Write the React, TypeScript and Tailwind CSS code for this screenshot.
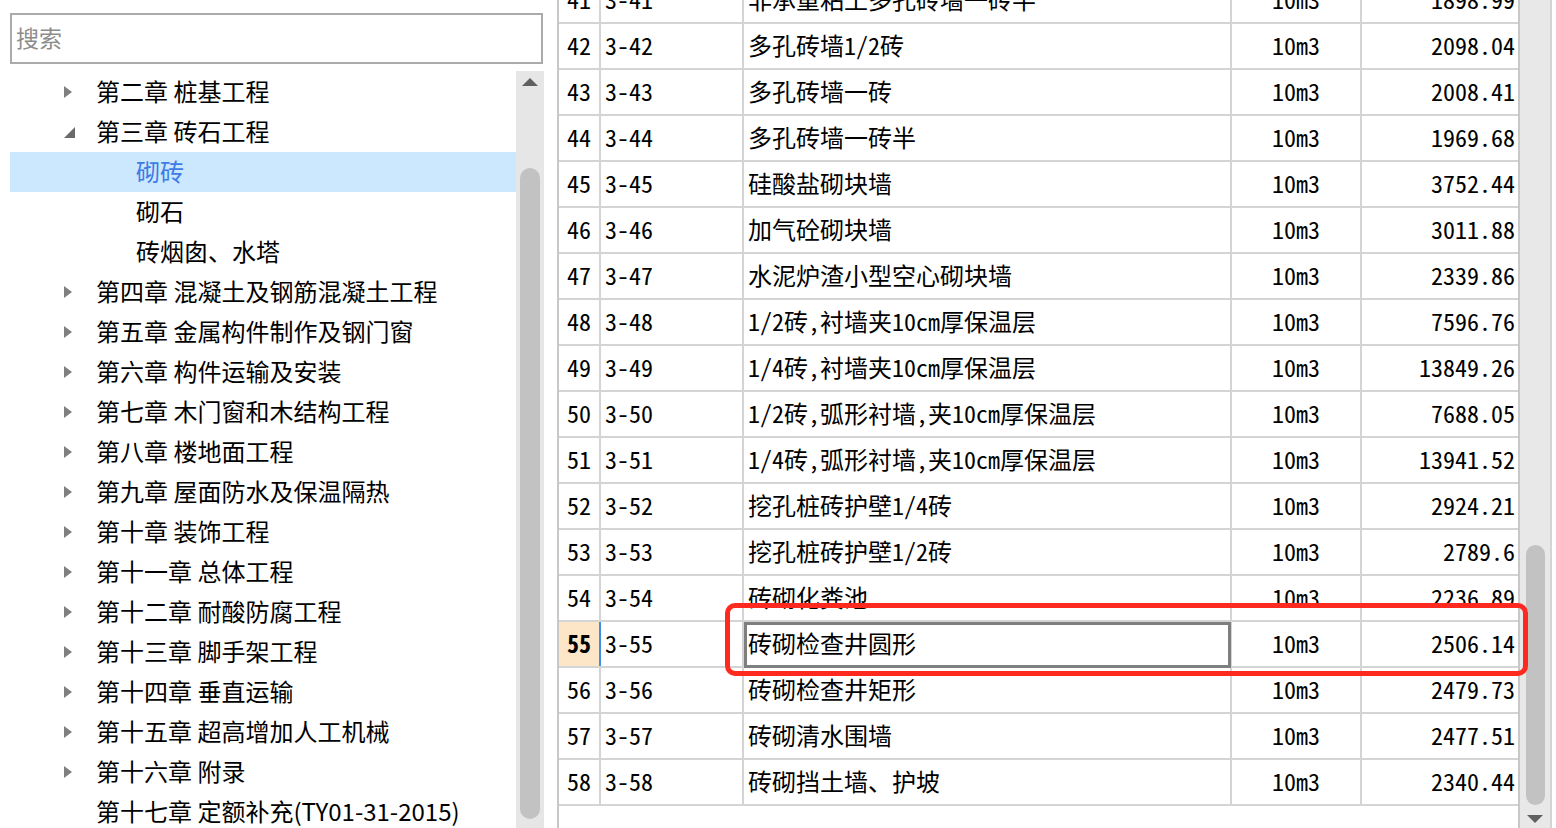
import React from "react";

type Row = [number, string, string, string];

const rows: Row[] = [
  [41, "3-41", "非承重粘土多孔砖墙一砖半", "1898.99"],
  [42, "3-42", "多孔砖墙1/2砖", "2098.04"],
  [43, "3-43", "多孔砖墙一砖", "2008.41"],
  [44, "3-44", "多孔砖墙一砖半", "1969.68"],
  [45, "3-45", "硅酸盐砌块墙", "3752.44"],
  [46, "3-46", "加气砼砌块墙", "3011.88"],
  [47, "3-47", "水泥炉渣小型空心砌块墙", "2339.86"],
  [48, "3-48", "1/2砖,衬墙夹10cm厚保温层", "7596.76"],
  [49, "3-49", "1/4砖,衬墙夹10cm厚保温层", "13849.26"],
  [50, "3-50", "1/2砖,弧形衬墙,夹10cm厚保温层", "7688.05"],
  [51, "3-51", "1/4砖,弧形衬墙,夹10cm厚保温层", "13941.52"],
  [52, "3-52", "挖孔桩砖护壁1/4砖", "2924.21"],
  [53, "3-53", "挖孔桩砖护壁1/2砖", "2789.6"],
  [54, "3-54", "砖砌化粪池", "2236.89"],
  [55, "3-55", "砖砌检查井圆形", "2506.14"],
  [56, "3-56", "砖砌检查井矩形", "2479.73"],
  [57, "3-57", "砖砌清水围墙", "2477.51"],
  [58, "3-58", "砖砌挡土墙、护坡", "2340.44"],
];

type TreeItem = { label: string; level: 1 | 2; state?: "collapsed" | "expanded"; selected?: boolean };

const tree: TreeItem[] = [
  { label: "第二章 桩基工程", level: 1, state: "collapsed" },
  { label: "第三章 砖石工程", level: 1, state: "expanded" },
  { label: "砌砖", level: 2, selected: true },
  { label: "砌石", level: 2 },
  { label: "砖烟囱、水塔", level: 2 },
  { label: "第四章 混凝土及钢筋混凝土工程", level: 1, state: "collapsed" },
  { label: "第五章 金属构件制作及钢门窗", level: 1, state: "collapsed" },
  { label: "第六章 构件运输及安装", level: 1, state: "collapsed" },
  { label: "第七章 木门窗和木结构工程", level: 1, state: "collapsed" },
  { label: "第八章 楼地面工程", level: 1, state: "collapsed" },
  { label: "第九章 屋面防水及保温隔热", level: 1, state: "collapsed" },
  { label: "第十章 装饰工程", level: 1, state: "collapsed" },
  { label: "第十一章 总体工程", level: 1, state: "collapsed" },
  { label: "第十二章 耐酸防腐工程", level: 1, state: "collapsed" },
  { label: "第十三章 脚手架工程", level: 1, state: "collapsed" },
  { label: "第十四章 垂直运输", level: 1, state: "collapsed" },
  { label: "第十五章 超高增加人工机械", level: 1, state: "collapsed" },
  { label: "第十六章 附录", level: 1, state: "collapsed" },
  { label: "第十七章 定额补充(TY01-31-2015)", level: 1 },
];

const treeFont = { fontFamily: '"Noto Sans CJK SC", "Noto Sans", sans-serif' };
const tableFont = { fontFamily: '"Noto Sans Mono CJK SC", "Noto Sans CJK SC", "Liberation Mono", monospace' };

function TreeRow({ item }: { item: TreeItem }) {
  return (
    <div
      className={`h-[40px] flex items-center text-[24px] leading-none whitespace-nowrap ${
        item.selected ? "bg-[#cce8ff] text-[#3d7be6]" : "text-black"
      } ${item.level === 1 ? "pl-[54px]" : "pl-[126px]"}`}
    >
      {item.level === 1 && (
        <div className="w-[32px] h-[40px] flex items-center">
          {item.state === "collapsed" && (
            <svg width="8" height="12" viewBox="0 0 8 12">
              <polygon points="0,0 8,6 0,12" fill="#808080" />
            </svg>
          )}
          {item.state === "expanded" && (
            <svg width="11" height="11" viewBox="0 0 11 11">
              <polygon points="11,0 11,11 0,11" fill="#6a6a6a" />
            </svg>
          )}
        </div>
      )}
      <span className="pb-[2px]">{item.label}</span>
    </div>
  );
}

function TableRow({ row }: { row: Row }) {
  const [n, code, name, price] = row;
  const active = n === 55;
  return (
    <div className="flex h-[46px] border-b-2 border-[#d4d4d4]">
      <div
        className={`w-[42px] shrink-0 flex items-center justify-center pb-[3px] border-r-2 ${
          active ? "bg-[#fde6c8] border-[#3b8eea] font-bold" : "border-[#d4d4d4]"
        }`}
      >
        {n}
      </div>
      <div className="w-[143px] shrink-0 flex items-center pl-[4px] pb-[3px] border-r-2 border-[#d4d4d4]">{code}</div>
      <div className="relative w-[488px] shrink-0 flex items-center pl-[4px] pb-[3px] border-r-2 border-[#d4d4d4] whitespace-nowrap">
        {name}
        {active && <div className="absolute left-0 top-0 w-[487px] h-[46px] border-[3px] border-[#7f7f7f]" />}
      </div>
      <div className="w-[130px] shrink-0 flex items-center justify-center pb-[3px] border-r-2 border-[#d4d4d4]">10m3</div>
      <div className="w-[156px] shrink-0 flex items-center justify-end pr-[3px] pb-[3px]">{price}</div>
    </div>
  );
}

export default function App() {
  return (
    <div className="relative w-[1556px] h-[828px] overflow-hidden bg-white flex">
      {/* Left panel */}
      <div className="w-[544px] shrink-0 flex flex-col pl-[10px]" style={treeFont}>
        <div className="mt-[13px] h-[51px] w-[533px] border-2 border-[#ababab] flex items-center pl-[4px] pb-[2px] text-[23px] text-[#8c8c8c]">
          搜索
        </div>
        <div className="mt-[7px] flex flex-1 min-h-0">
          <div className="w-[506px] pt-[1px] overflow-hidden">
            {tree.map((t) => (
              <TreeRow key={t.label} item={t} />
            ))}
          </div>
          <div className="w-[28px] bg-[#e6e6e6] flex flex-col items-center">
            <svg className="mt-[7px]" width="16" height="8" viewBox="0 0 16 8">
              <polygon points="8,0 16,8 0,8" fill="#606060" />
            </svg>
            <div className="mt-[82px] w-[20px] h-[651px] rounded-[10px] bg-[#c2c2c2]" />
          </div>
        </div>
      </div>

      <div className="w-[13px] shrink-0" />

      {/* Table */}
      <div className="w-[963px] shrink-0 border-l-2 border-r-2 border-[#c8c8c8] overflow-hidden text-[24px] leading-none text-black" style={tableFont}>
        <div className="-mt-[22px]">
          {rows.map((r) => (
            <TableRow key={r[0]} row={r} />
          ))}
        </div>
      </div>

      {/* Right scrollbar */}
      <div className="w-[30px] shrink-0 bg-[#e8e8e8] flex flex-col items-center">
        <div className="mt-[545px] w-[19px] h-[260px] rounded-[10px] bg-[#c2c2c2]" />
        <svg className="mt-[10px]" width="16" height="8" viewBox="0 0 16 8">
          <polygon points="0,0 16,0 8,8" fill="#606060" />
        </svg>
      </div>
      <div className="w-[2px] shrink-0 bg-[#d4d4d4]" />
      <div className="flex-1" />

      {/* Red annotation */}
      <div className="absolute left-[725px] top-[603px] w-[803px] h-[73px] border-[5px] border-[#ff2a1f] rounded-[10px]" />
    </div>
  );
}
